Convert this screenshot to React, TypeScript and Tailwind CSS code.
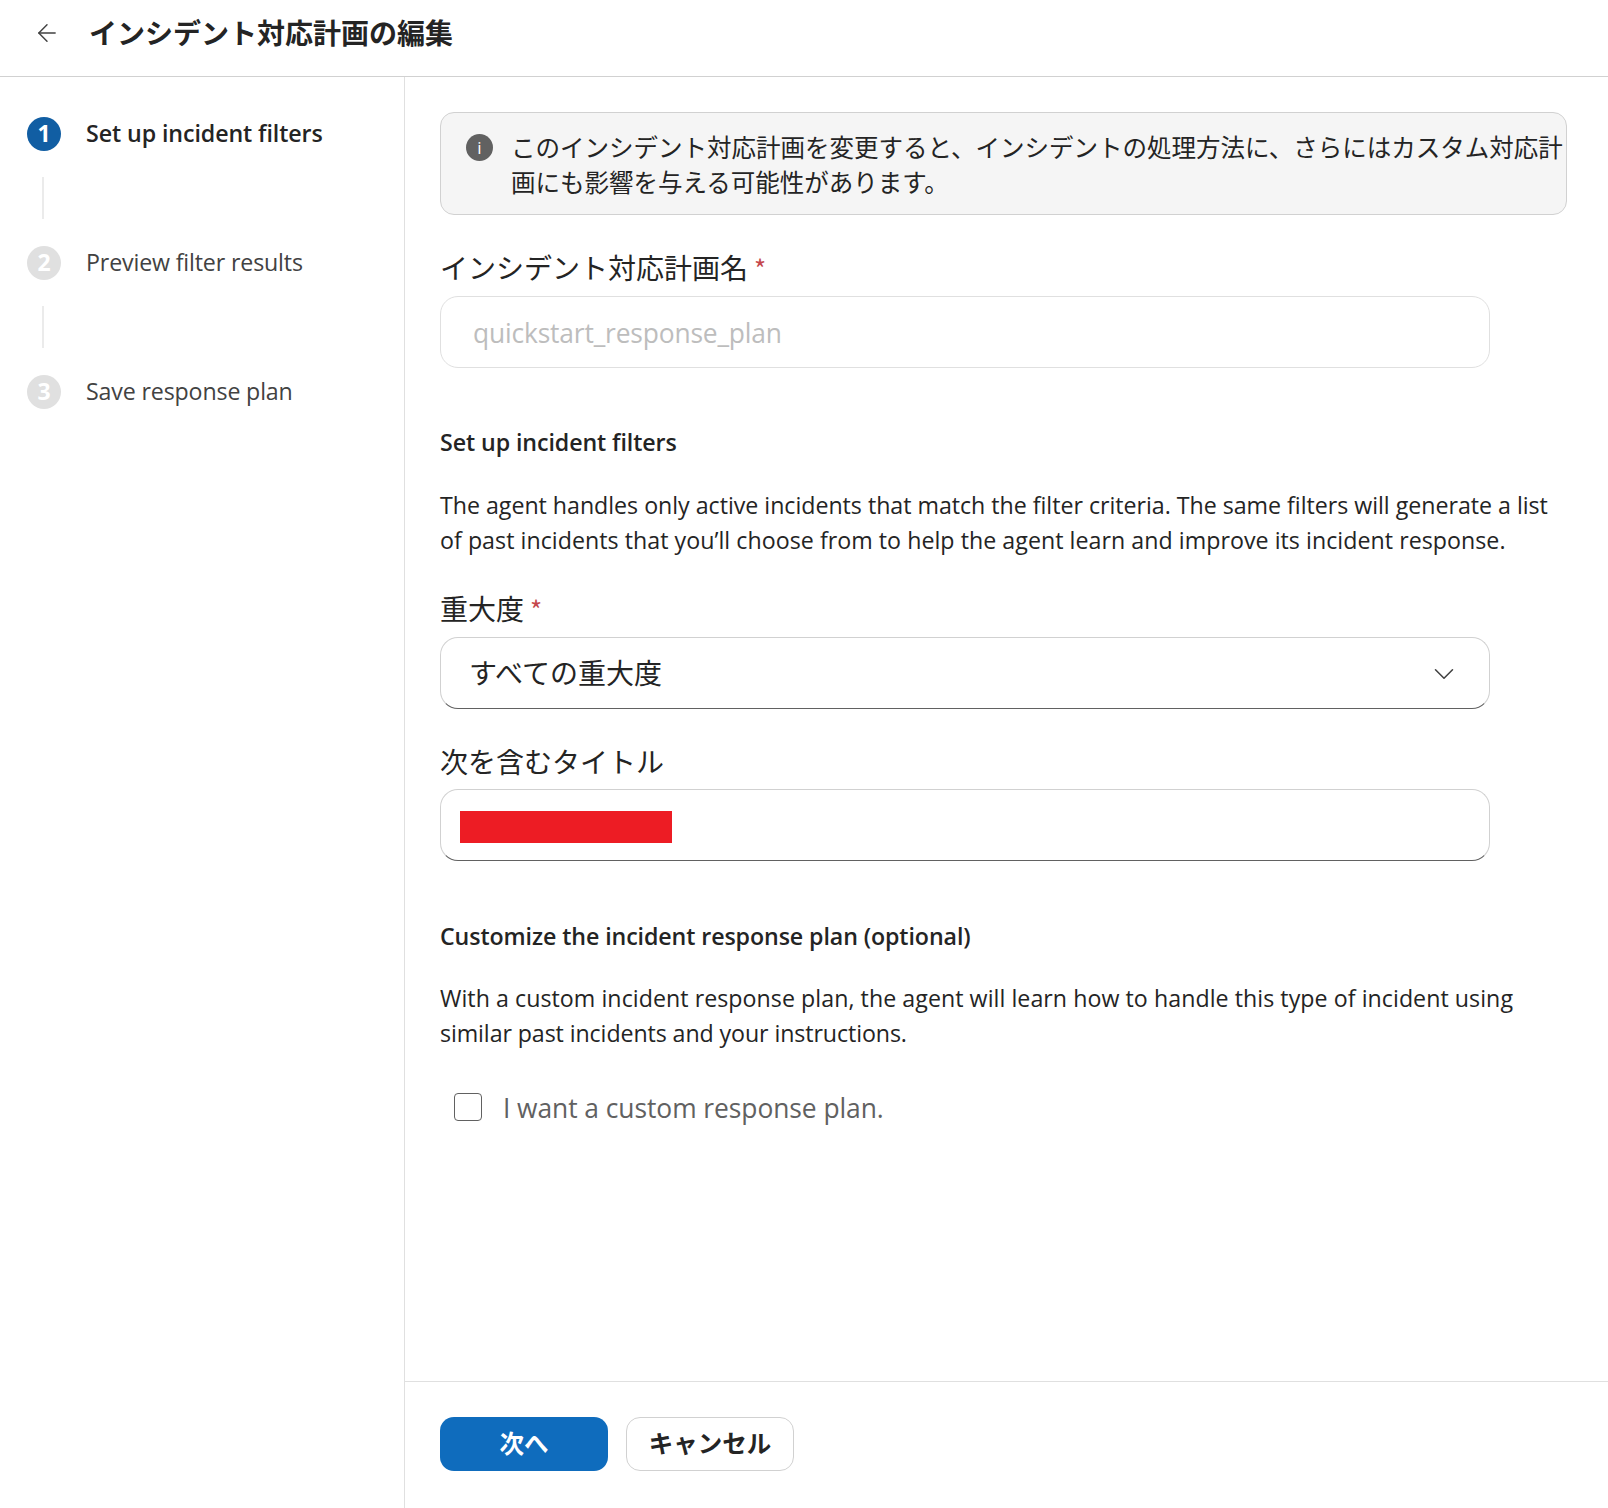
import { ArrowLeft, ChevronDown } from 'lucide-react'

const STEPS = ['Set up incident filters', 'Preview filter results', 'Save response plan']

const FONT = "font-['Open_Sans','Noto_Sans_CJK_JP',sans-serif]"
const JA = "font-['Noto_Sans_CJK_JP','Noto_Sans',sans-serif]"

function Label({ text, required }: { text: string; required?: boolean }) {
  return (
    <div className={`${JA} text-[28px] leading-[40px] text-[#242424]`}>
      {text}
      {required && <span className="ml-[6px] text-[26px] text-[#c4474b]">*</span>}
    </div>
  )
}

function Sidebar() {
  return (
    <aside className="w-[405px] shrink-0 border-r border-[#e0e0e0] pl-[27px] pt-[39px]">
      {STEPS.map((step, i) => (
        <div key={step}>
          <div className="flex h-[35px] items-center">
            <span
              className={`flex h-[34px] w-[34px] items-center justify-center rounded-full text-[23px] font-bold text-white ${
                i === 0 ? 'bg-[#115ea3]' : 'bg-[#e0e0e0]'
              }`}
            >
              {i + 1}
            </span>
            <span
              className={`ml-[25px] text-[23.2px] ${
                i === 0 ? 'font-semibold tracking-[-0.08px] text-[#242424]' : 'tracking-[-0.15px] text-[#424242]'
              }`}
            >
              {step}
            </span>
          </div>
          {i < STEPS.length - 1 && <div className="mb-[26px] ml-[15px] mt-[26px] h-[42px] w-[2px] bg-[#ebebeb]" />}
        </div>
      ))}
    </aside>
  )
}

export default function App() {
  return (
    <div className={`${FONT} flex h-[1508px] flex-col bg-white text-[#242424]`}>
      <header className="flex h-[77px] shrink-0 items-center border-b border-[#d1d1d1] pb-[11px] pl-[33px]">
        <ArrowLeft size={28} strokeWidth={1.25} className="text-[#424242]" />
        <h1 className={`${JA} mb-[2px] ml-[28px] text-[28px] font-bold leading-[40px]`}>インシデント対応計画の編集</h1>
      </header>

      <div className="flex min-h-0 flex-1">
        <Sidebar />

        <main className="flex min-w-0 flex-1 flex-col">
          <div className="flex-1 pl-[35px] pr-[41px] pt-[35px]">
            <div className="flex h-[103px] rounded-[14px] border border-[#d1d1d1] bg-[#f5f5f5] pl-[25px] pt-[16px]">
              <span className="mt-[5px] flex h-[27px] w-[27px] shrink-0 items-center justify-center rounded-full bg-[#616161] text-[17px] leading-none text-white">
                i
              </span>
              <p className={`${JA} ml-[18px] w-[1060px] text-[24.5px] leading-[35px] text-[#242424]`}>
                このインシデント対応計画を変更すると、インシデントの処理方法に、さらにはカスタム対応計画にも影響を与える可能性があります。
              </p>
            </div>

            <div className="mt-[32px]">
              <Label text="インシデント対応計画名" required />
            </div>
            <div className="mt-[8px] flex h-[72px] w-[1050px] items-center rounded-[18px] border border-[#e0e0e0] pl-[32px] pt-[3px] text-[26.4px] tracking-[-0.17px] text-[#bdbdbd]">
              quickstart_response_plan
            </div>

            <h2 className="mt-[57px] text-[23.2px] font-semibold leading-[35px] tracking-[-0.08px]">
              Set up incident filters
            </h2>
            <p className="mt-[28px] text-[23.2px] leading-[35px]">
              <span className="tracking-[-0.02px]">
                The agent handles only active incidents that match the filter criteria. The same filters will generate a list
              </span>
              <br />
              <span className="tracking-[0.04px]">
                of past incidents that you’ll choose from to help the agent learn and improve its incident response.
              </span>
            </p>

            <div className="mt-[30px]">
              <Label text="重大度" required />
            </div>
            <div className="mt-[8px] flex h-[72px] w-[1050px] items-center justify-between rounded-[18px] border border-[#d1d1d1] border-b-[#616161] pl-[28px] pr-[28px]">
              <span className={`${JA} pb-[2px] text-[28px]`}>すべての重大度</span>
              <ChevronDown size={34} strokeWidth={1.1} className="mt-[2px] text-[#424242]" />
            </div>

            <div className="mt-[32px]">
              <Label text="次を含むタイトル" />
            </div>
            <div className="mt-[8px] flex h-[72px] w-[1050px] items-center rounded-[18px] border border-[#d1d1d1] border-b-[#616161] pl-[19px] pt-[3px]">
              <div className="h-[32px] w-[212px] bg-[#ed1c24]" />
            </div>

            <h2 className="mt-[58px] text-[23.2px] font-semibold leading-[35px] tracking-[-0.09px]">
              Customize the incident response plan (optional)
            </h2>
            <p className="mt-[27px] text-[23.2px] leading-[35px]">
              <span className="tracking-[0.05px]">
                With a custom incident response plan, the agent will learn how to handle this type of incident using
              </span>
              <br />
              <span className="tracking-[-0.09px]">similar past incidents and your instructions.</span>
            </p>

            <div className="ml-[14px] mt-[34px] flex items-center">
              <span className="h-[28px] w-[28px] rounded-[4px] border border-[#616161]" />
              <span className="ml-[21px] mt-[4px] text-[26.4px] tracking-[-0.06px] text-[#616161]">
                I want a custom response plan.
              </span>
            </div>
          </div>

          <footer className="flex h-[127px] shrink-0 gap-[18px] border-t border-[#e0e0e0] pl-[35px] pt-[35px]">
            <button
              type="button"
              className={`${JA} h-[54px] w-[168px] rounded-[14px] bg-[#0f6cbd] pb-[2px] text-[24.5px] font-bold text-white`}
            >
              次へ
            </button>
            <button
              type="button"
              className={`${JA} h-[54px] w-[168px] rounded-[14px] border border-[#d1d1d1] bg-white pb-[2px] text-[24.5px] font-bold text-[#242424]`}
            >
              キャンセル
            </button>
          </footer>
        </main>
      </div>
    </div>
  )
}
